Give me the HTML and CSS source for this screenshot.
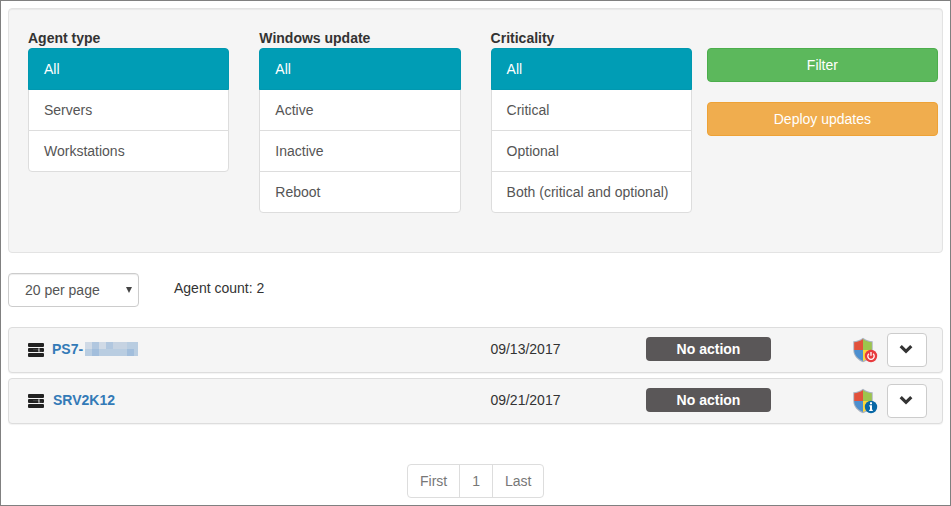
FILE: index.html
```html
<!DOCTYPE html>
<html lang="en">
<head>
<meta charset="utf-8">
<title>Windows update</title>
<link rel="stylesheet" href="styles.css">
</head>
<body>
<svg class="defs" width="0" height="0" aria-hidden="true">
  <symbol id="server" viewBox="0 0 16 14">
    <rect x="0" y="0" width="16" height="4" rx="1"/>
    <rect x="0" y="5" width="16" height="4" rx="1"/>
    <path d="M5 6.700h6M11 5.200v3.600M11 8.200h3" stroke="#f5f5f5" stroke-width=".6" fill="none" opacity=".25"/>
    <path d="M10.500 5.300h.9v3.400h-.9z" fill="#f5f5f5"/>
    <rect x="0" y="10" width="16" height="4" rx="1"/>
  </symbol>
  <symbol id="shield" viewBox="0 0 26 26">
    <path d="M11 .8C8 3.300 5 4 1.300 4.300v8.700c0 6 4.800 10.300 9.700 12.300 5-2 9.700-6.300 9.700-12.300V4.300C17 4 14 3.300 11 .8z" fill="#aab3bf"/>
    <path d="M11 2C8 4.200 5.500 5 2.200 5.300V13H11z" fill="#e2513b"/>
    <path d="M11 2c3 2.200 5.500 3 8.800 3.300V13H11z" fill="#9dc54d"/>
    <path d="M2.200 13H11v11C7 22.200 2.200 18.500 2.200 13z" fill="#4c8fcf"/>
    <path d="M19.800 13H11v11c4-1.800 8.800-5.500 8.800-11z" fill="#fbd83c"/>
  </symbol>
  <symbol id="chevron" viewBox="0 0 14 10">
    <path d="M1.700 2.200L7 7.300l5.300-5.100" fill="none" stroke="#333" stroke-width="3.200"/>
  </symbol>
</svg>
<main class="frame">
  <section class="well">
    <div class="group">
      <strong>Agent type</strong>
      <ul class="list"><li class="active">All</li><li>Servers</li><li>Workstations</li></ul>
    </div>
    <div class="group">
      <strong>Windows update</strong>
      <ul class="list"><li class="active">All</li><li>Active</li><li>Inactive</li><li>Reboot</li></ul>
    </div>
    <div class="group">
      <strong>Criticality</strong>
      <ul class="list"><li class="active">All</li><li>Critical</li><li>Optional</li><li>Both (critical and optional)</li></ul>
    </div>
    <div class="actions">
      <button class="btn success">Filter</button>
      <button class="btn warning">Deploy updates</button>
    </div>
  </section>
  <div class="toolbar">
    <div class="select"><span>20 per page</span><i></i></div>
    <span class="count">Agent count: 2</span>
  </div>
  <section class="agents">
    <article class="agent">
      <svg class="server"><use href="#server"/></svg>
      <a class="name masked">PS7-<span class="mask"><i></i><i></i><i></i><i></i><i></i><i></i><i></i><i></i><i></i><i></i><i></i><i></i><i></i><i></i><i></i><i></i></span></a>
      <span class="date">09/13/2017</span>
      <span class="label">No action</span>
      <svg class="shield" viewBox="0 0 26 26"><use href="#shield"/><circle cx="19" cy="19" r="6.200" fill="#e83b3f"/><path d="M16.900 16.700a3.200 3.200 0 1 0 4.200 0M19 15v3.800" fill="none" stroke="#fff" stroke-width="1.300"/></svg>
      <button class="toggle" aria-label="Expand"><svg class="chevron"><use href="#chevron"/></svg></button>
    </article>
    <article class="agent">
      <svg class="server"><use href="#server"/></svg>
      <a class="name">SRV2K12</a>
      <span class="date">09/21/2017</span>
      <span class="label">No action</span>
      <svg class="shield" viewBox="0 0 26 26"><use href="#shield"/><circle cx="19" cy="19" r="6.200" fill="#0868a6"/><path d="M18 14.300h2v2h-2zM17.300 17.200H20v4.600h.8V23h-3.600v-1.200h.8v-3.400h-.7z" fill="#fff"/></svg>
      <button class="toggle" aria-label="Expand"><svg class="chevron"><use href="#chevron"/></svg></button>
    </article>
  </section>
  <nav class="pages"><span>First</span><span>1</span><span>Last</span></nav>
</main>
</body>
</html>
```
FILE: styles.css
```css
* { box-sizing: border-box; }
body { margin: 0; background: #fff; color: #333; font: 14px/20px "Liberation Sans", Arial, sans-serif; }
.defs { position: absolute; }
.frame { width: 951px; height: 506px; padding: 7px; border: 1px solid #808080; overflow: hidden; }
.well { display: flex; width: 935px; height: 245px; padding: 19px; background: #f5f5f5; border: 1px solid #e3e3e3; border-radius: 4px; box-shadow: inset 0 1px 1px rgba(0,0,0,.05); }
.group { flex: none; width: 201.300px; margin-right: 30px; }
.group:nth-child(3) { margin-right: 15px; }
.group strong { display: block; }
.list { list-style: none; margin: 0; padding: 0; color: #555; }
.list li { height: 42px; margin-bottom: -1px; padding: 10px 15px; background: #fff; border: 1px solid #ddd; }
.list li:first-child { border-radius: 4px 4px 0 0; }
.list li:last-child { border-radius: 0 0 4px 4px; }
.list .active { position: relative; color: #fff; background: #009db5; border-color: #0098b0; }
.actions { flex: none; width: 231px; padding-top: 20px; display: flex; flex-direction: column; gap: 20px; }
.btn { height: 34px; padding: 0; color: #fff; font: inherit; border: 1px solid; border-radius: 4px; }
.success { background: #5cb85c; border-color: #4cae4c; }
.warning { background: #f0ad4e; border-color: #eea236; }
.toolbar { display: flex; margin-top: 20px; height: 34px; }
.select { display: flex; align-items: center; justify-content: space-between; width: 131px; padding: 0 6px 0 16px; color: #555; border: 1px solid #ccc; border-radius: 4px; box-shadow: inset 0 1px 1px rgba(0,0,0,.075); }
.select i { border: 3px solid transparent; border-top: 6px solid #444; border-bottom: 0; }
.count { margin: 5px 0 0 35px; }
.agents { display: flex; flex-direction: column; gap: 5px; margin-top: 20px; }
.agent { display: grid; grid-template-columns: 24px 438px 156px 125px 81px 26px 9px 40px; align-items: center; width: 935px; height: 46px; padding-left: 19px; background: #f5f5f5; border: 1px solid #ddd; border-radius: 4px; box-shadow: 0 1px 1px rgba(0,0,0,.05); }
.server { width: 16px; height: 14px; fill: #222; }
.name { display: flex; align-items: center; height: 20px; margin-top: -2px; padding-left: 1px; color: #337ab7; font-weight: bold; }
.masked { padding-left: 0; }
.mask { display: grid; grid-template: repeat(2, 7px) / repeat(7, 7px) 4px; margin-left: 2px; box-shadow: -1px 3px 0 -1px #7f9fc6; }
.mask i { background: #b9cde1; }
.mask i:nth-child(1), .mask i:nth-child(3) { background: #d0dae6; }
.mask i:nth-child(2), .mask i:nth-child(4) { background: #b1c7df; }
.mask i:nth-child(5), .mask i:nth-child(6) { background: #c6d3e2; }
.mask i:nth-child(10), .mask i:nth-child(15) { background: #a2bedc; }
.mask { box-shadow: none; }
.date { margin-top: -2px; padding-left: .4px; }
.label { height: 24px; margin-top: -2px; color: #fff; background: #5a5758; border-radius: 4px; font-weight: bold; line-height: 24px; text-align: center; }
.shield { grid-column: 6; width: 26px; height: 26px; }
.toggle { grid-column: 8; display: flex; align-items: center; justify-content: center; height: 34px; padding: 0 2px 2px 0; background: #fff; border: 1px solid #ccc; border-radius: 4px; }
.chevron { width: 14px; height: 10px; }
.pages { display: flex; width: 137px; height: 34px; margin: 40px auto 0 399px; color: #777; border: 1px solid #ddd; border-radius: 4px; line-height: 32px; }
.pages span { padding: 0 12px; }
.pages span + span { border-left: 1px solid #ddd; }
```
